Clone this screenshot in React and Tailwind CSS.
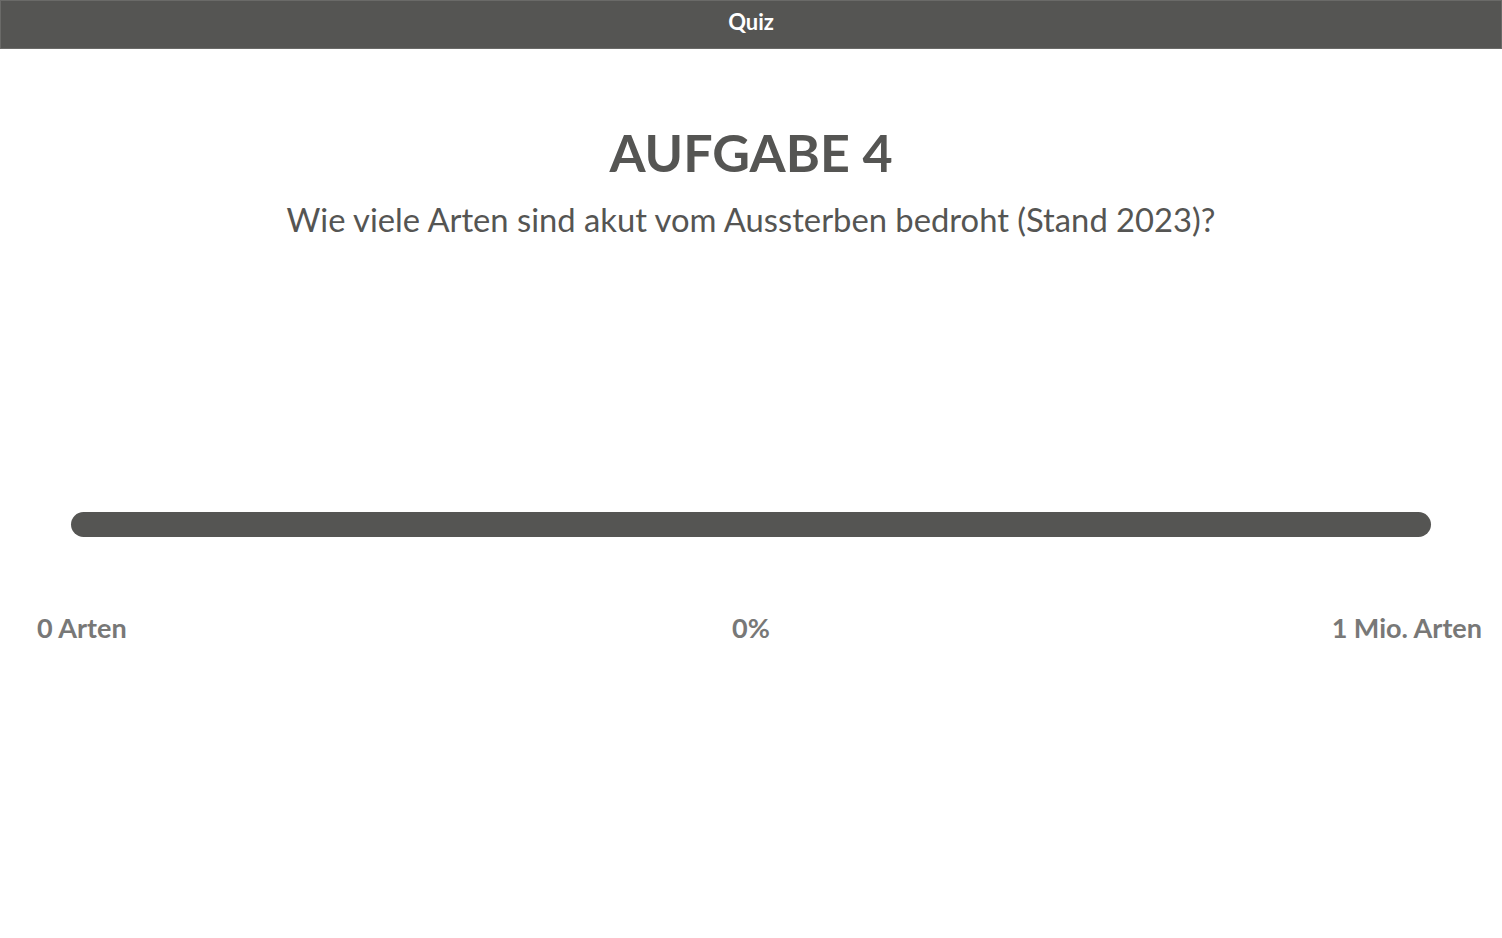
export default function App() {
  const font = { fontFamily: "Lato, 'Noto Sans', sans-serif" };
  return (
    <div className="w-full min-h-[938px] bg-white flex flex-col" style={font}>
      <header className="h-[49px] bg-[#555553] border border-[#6a6a68] flex items-center justify-center pb-[5px]">
        <span className="text-white text-[22px] leading-[26px] font-bold">Quiz</span>
      </header>

      <main className="flex flex-col items-center">
        <h1 className="mt-[72px] text-[52px] leading-[62px] font-bold text-[#555553]">
          AUFGABE 4
        </h1>
        <p className="mt-[17px] text-[32.75px] leading-[40px] text-[#555553]">
          Wie viele Arten sind akut vom Aussterben bedroht (Stand 2023)?
        </p>
      </main>

      <div className="mt-[272px] px-[71px]">
        <div className="h-[25px] w-full rounded-full bg-[#555553]" />
      </div>

      <div className="mt-[73px] grid grid-cols-[1fr_auto_1fr] items-center text-[27px] leading-[36px] font-bold text-[#787877]">
        <span className="pl-[37px] text-left">0 Arten</span>
        <span className="text-center">0%</span>
        <span className="pr-[20px] text-right">1 Mio. Arten</span>
      </div>
    </div>
  );
}
